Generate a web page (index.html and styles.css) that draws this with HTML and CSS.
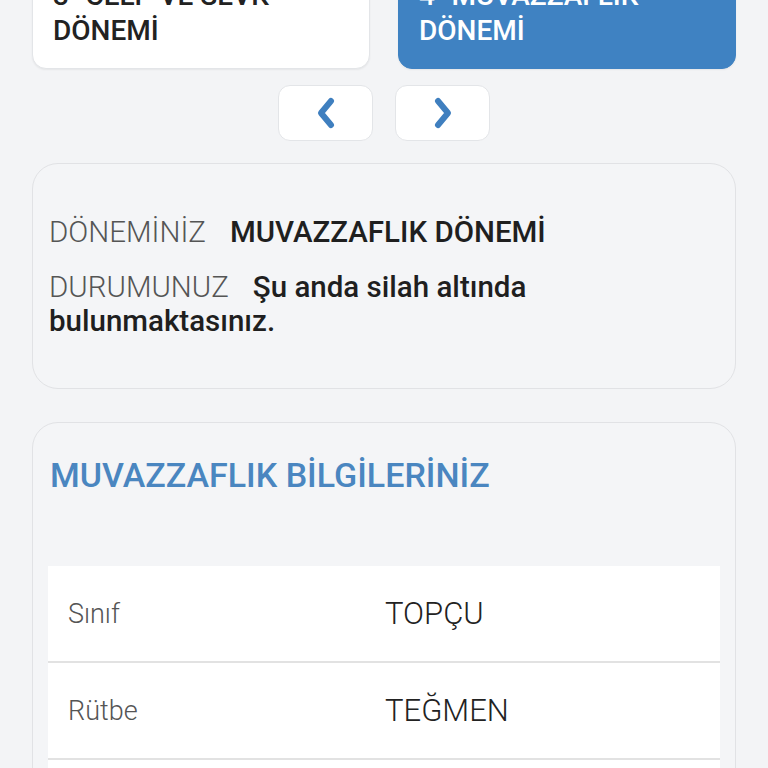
FILE: index.html
```html
<!DOCTYPE html>
<html lang="tr">
<head>
    <meta charset="UTF-8">
    <meta name="viewport" content="width=device-width, initial-scale=1.0">
    <title>Askerlik Durum Bilgisi</title>
    <link rel="stylesheet" href="styles.css">
</head>
<body>
    <div class="page">
        <!-- Period steps -->
        <div class="steps">
            <div class="step">3- CELP VE SEVK DÖNEMİ</div>
            <div class="step active">4- MUVAZZAFLIK DÖNEMİ</div>
        </div>

        <div class="pager">
            <button class="pager-btn" aria-label="Önceki">
                <svg width="28" height="34" viewBox="0 0 28 34"><path d="M19 5 L9 17 L19 29" fill="none" stroke="#3f7fbf" stroke-width="6" stroke-linecap="round" stroke-linejoin="round"/></svg>
            </button>
            <button class="pager-btn" aria-label="Sonraki">
                <svg width="28" height="34" viewBox="0 0 28 34"><path d="M9 5 L19 17 L9 29" fill="none" stroke="#3f7fbf" stroke-width="6" stroke-linecap="round" stroke-linejoin="round"/></svg>
            </button>
        </div>

        <!-- Status card -->
        <div class="card status-card">
            <p class="status-line"><span class="label">DÖNEMİNİZ</span><b>MUVAZZAFLIK DÖNEMİ</b></p>
            <p class="status-line"><span class="label">DURUMUNUZ</span><b>Şu anda silah altında bulunmaktasınız.</b></p>
        </div>

        <!-- Details card -->
        <div class="card info-card">
            <h2>MUVAZZAFLIK BİLGİLERİNİZ</h2>
            <div class="info-table">
                <div class="info-row">
                    <span class="info-key">Sınıf</span>
                    <span class="info-value">TOPÇU</span>
                </div>
                <div class="info-row">
                    <span class="info-key">Rütbe</span>
                    <span class="info-value">TEĞMEN</span>
                </div>
                <div class="info-row"></div>
            </div>
        </div>
    </div>
</body>
</html>
```

FILE: styles.css
```css
* {
    margin: 0;
    padding: 0;
    box-sizing: border-box;
}

body {
    font-family: Roboto, "Noto Sans", sans-serif;
    background: #f3f4f6;
    color: #1f1f1f;
    overflow: hidden;
}

.page {
    padding: 0 32px;
    margin-top: -33px;
}

/* Period steps */
.steps {
    display: grid;
    grid-template-columns: 1fr 1fr;
    gap: 28px;
}

.step {
    background: white;
    border: 1px solid #e3e5e8;
    border-radius: 14px;
    padding: 10px 20px 20px 20px;
    font-size: 28px;
    font-weight: 500;
    line-height: 35px;
    color: #222;
    box-shadow: 0 1px 2px rgba(0,0,0,0.06);
}

.step.active {
    background: #3f82c2;
    border-color: #3f82c2;
    color: white;
}

.pager {
    display: flex;
    justify-content: center;
    gap: 22px;
    margin: 16px 0 22px;
}

.pager-btn {
    width: 95px;
    height: 56px;
    background: white;
    border: 1px solid #e3e5e8;
    border-radius: 12px;
    display: flex;
    align-items: center;
    justify-content: center;
}

/* Cards */
.card {
    border: 1px solid #e1e2e5;
    border-radius: 26px;
    background: #f4f5f7;
}

.status-card {
    padding: 51px 16px 50px;
    margin-bottom: 33px;
}

.status-line {
    font-size: 29.5px;
    line-height: 34px;
}

.status-line + .status-line {
    margin-top: 21px;
}

.status-line .label {
    font-weight: 300;
    color: #555;
    margin-right: 24px;
}

.status-line b {
    font-weight: 500;
    color: #1f1f1f;
}

.info-card {
    padding: 32px 15px 0;
}

.info-card h2 {
    font-size: 34px;
    line-height: 40px;
    font-weight: 500;
    color: #4a86c0;
    margin: 0 0 71px 2px;
}

.info-table {
    background: white;
}

.info-row {
    display: flex;
    align-items: center;
    height: 97px;
    border-bottom: 2px solid #e2e2e2;
    padding-left: 20px;
}

.info-key {
    width: 317px;
    font-size: 27px;
    font-weight: 300;
    color: #555;
}

.info-value {
    font-size: 31px;
    font-weight: 300;
    color: #222;
}
```
